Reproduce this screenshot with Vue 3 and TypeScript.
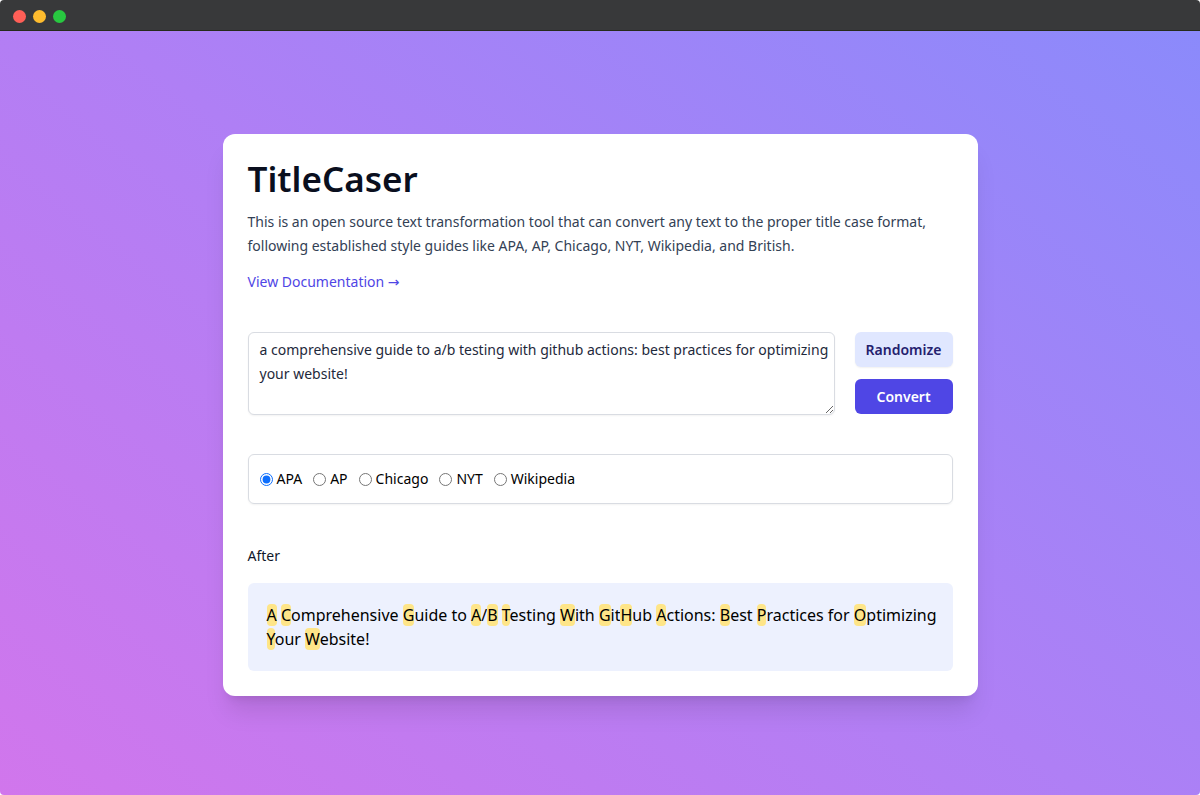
<script setup lang="ts">
import { computed, ref } from 'vue'

interface Piece {
  text: string
  changed: boolean
}

const styles = ['APA', 'AP', 'Chicago', 'NYT', 'Wikipedia']
const selected = ref('APA')
const source = ref(
  'a comprehensive guide to a/b testing with github actions: best practices for optimizing your website!',
)
const result = ref(
  'A Comprehensive Guide to A/B Testing With GitHub Actions: Best Practices for Optimizing Your Website!',
)

const pieces = computed<Piece[]>(() =>
  result.value
    .split(/([A-Z])/)
    .filter((text) => text !== '')
    .map((text) => ({ text, changed: /^[A-Z]$/.test(text) })),
)
</script>

<template>
  <div class="window">
    <header class="titlebar">
      <span class="light close"></span>
      <span class="light minimize"></span>
      <span class="light zoom"></span>
    </header>
    <main class="stage">
      <section class="card">
        <h1>TitleCaser</h1>
        <p class="intro">
          This is an open source text transformation tool that can convert any text to the proper
          title case format, following established style guides like APA, AP, Chicago, NYT,
          Wikipedia, and British.
        </p>
        <a class="docs" href="#">View Documentation <span class="arrow">→</span></a>

        <form class="editor" @submit.prevent>
          <textarea v-model="source" aria-label="Text to convert" spellcheck="false"></textarea>
          <div class="actions">
            <button type="button" class="secondary">Randomize</button>
            <button type="submit" class="primary">Convert</button>
          </div>
        </form>

        <div class="options" role="radiogroup" aria-label="Style guide">
          <label v-for="style in styles" :key="style" class="option">
            <input v-model="selected" type="radio" name="style" :value="style" />
            <span>{{ style }}</span>
          </label>
        </div>

        <h2>After</h2>
        <p class="output"><template v-for="(piece, i) in pieces" :key="i"><mark v-if="piece.changed">{{ piece.text }}</mark><template v-else>{{ piece.text }}</template></template></p>
      </section>
    </main>
  </div>
</template>

<style>
body {
  margin: 0;
  background: #fff;
}
</style>

<style scoped>
.window {
  display: flex;
  flex-direction: column;
  min-height: 100vh;
  border-radius: 4px;
  overflow: hidden;
  font-family: "Noto Sans", "Liberation Sans", sans-serif;
  font-size: 14px;
  line-height: 24px;
  color: #0f172a;
}

.titlebar {
  display: flex;
  align-items: center;
  gap: 7px;
  height: 31px;
  padding: 2px 13px 0;
  box-sizing: border-box;
  background: #38393a;
  border-bottom: 1px solid #262b1c;
}

.light {
  width: 13px;
  height: 13px;
  border-radius: 50%;
}

.close {
  background: #ff5f57;
}

.minimize {
  background: #febc2e;
}

.zoom {
  background: #28c840;
}

.stage {
  flex: 1;
  padding: 103px 24px 40px;
  background: linear-gradient(38deg, #d176ec, #af7ff5 50%, #8b8afb);
}

.card {
  box-sizing: border-box;
  max-width: 755px;
  margin: 0 auto;
  padding: 25px;
  border-radius: 12px;
  background: #fff;
  box-shadow: 0 20px 25px -5px rgba(0, 0, 0, 0.1), 0 8px 10px -6px rgba(0, 0, 0, 0.1);
}

h1 {
  margin: 0 0 11px;
  font-size: 35px;
  font-weight: 600;
  line-height: 40px;
  color: #0a0f1e;
}

.intro {
  margin: 0 0 12px;
  color: #334155;
}

.docs {
  display: block;
  width: fit-content;
  color: #4f46e5;
  text-decoration: none;
}

.arrow {
  font-family: "DejaVu Sans", sans-serif;
}

.editor {
  display: flex;
  gap: 20px;
  margin-top: 38px;
}

textarea {
  flex: 1;
  min-width: 0;
  height: 83px;
  box-sizing: border-box;
  padding: 5px 4px 5px 11px;
  border: 1px solid #d9dce2;
  border-radius: 6px;
  background: #fff;
  box-shadow: 0 1px 2px rgba(0, 0, 0, 0.05);
  color: #1e293b;
  font: inherit;
  resize: vertical;
}

.actions {
  display: flex;
  flex-direction: column;
  gap: 12px;
}

button {
  height: 35px;
  padding: 0 11px;
  border: 0;
  border-radius: 6px;
  font: inherit;
  font-weight: 600;
}

.secondary {
  background: #e0e7ff;
  color: #24206e;
  box-shadow: 0 1px 2px rgba(0, 0, 0, 0.06);
}

.primary {
  background: #4f46e5;
  color: #fff;
}

.options {
  display: flex;
  gap: 11px;
  margin-top: 39px;
  padding: 12px 11px;
  border: 1px solid #d9dce2;
  border-radius: 6px;
  box-shadow: 0 1px 2px rgba(0, 0, 0, 0.05);
  color: #000;
}

.option {
  display: flex;
  align-items: center;
  gap: 4px;
}

.option input {
  width: 13px;
  height: 13px;
  margin: 0;
  accent-color: #0d6efd;
}

h2 {
  margin: 40px 0 15px;
  font-size: 14px;
  font-weight: 400;
}

.output {
  margin: 0;
  padding: 20px 14px 20px 19px;
  border-radius: 6px;
  background: #edf1fe;
  color: #000;
  font-size: 16px;
}

mark {
  border-radius: 4px;
  background: #fee588;
  color: inherit;
}
</style>
